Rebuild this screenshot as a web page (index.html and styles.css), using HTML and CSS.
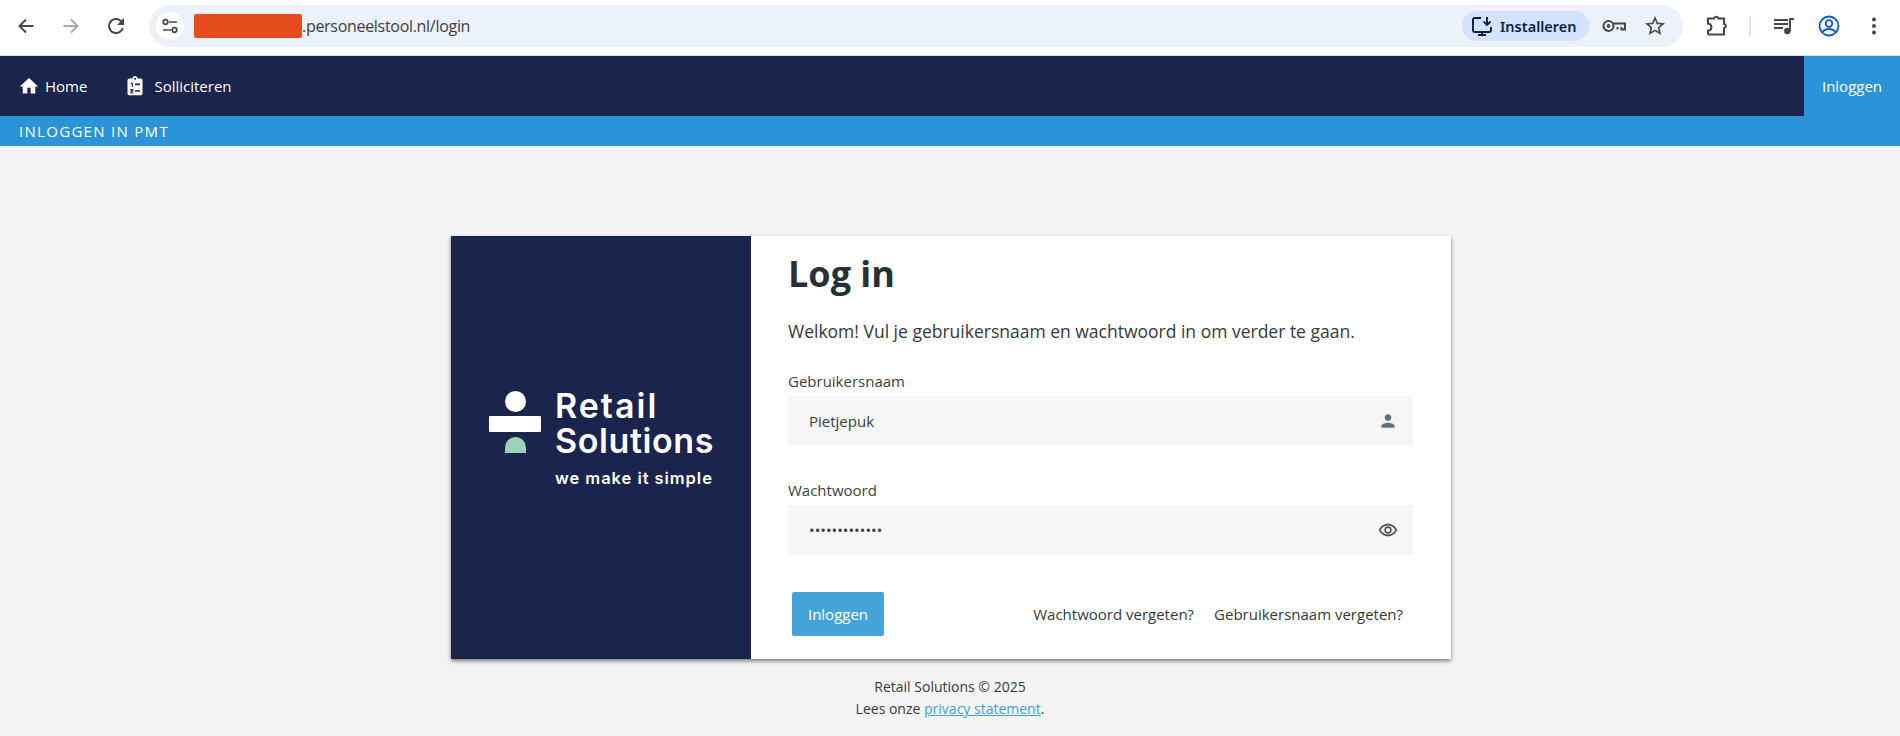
FILE: index.html
```html
<!DOCTYPE html>
<html lang="nl">
<head>
<meta charset="utf-8">
<title>Inloggen in PMT</title>
<link rel="stylesheet" href="styles.css">
</head>
<body>
<header class="browser">
  <svg class="bi" viewBox="0 0 24 24"><path class="ln dark" d="M19.5 12H5.5M12 5.500 5.500 12l6.500 6.500"/></svg>
  <svg class="bi" viewBox="0 0 24 24"><path class="ln faint" d="M4.500 12h14M12 5.500l6.500 6.500-6.500 6.500"/></svg>
  <svg class="bi" viewBox="0 0 24 24"><path class="fill-dark" d="M17.650 6.350A7.960 7.960 0 0 0 12 4a8 8 0 1 0 7.730 10h-2.080A6 6 0 1 1 12 6c1.660 0 3.140.69 4.220 1.780L13 11h7V4l-2.350 2.350z"/></svg>
  <div class="omnibox">
    <span class="chip">
      <svg class="bi" viewBox="0 0 24 24"><path class="ln dark thin" d="M11 8h8M5 16h8"/><circle class="ln dark thin" cx="7.500" cy="8" r="2.300"/><circle class="ln dark thin" cx="16.500" cy="16" r="2.300"/></svg>
    </span>
    <div class="url"><span class="redact"></span><span>.personeelstool.nl/login</span></div>
    <span class="install">
      <svg class="bi" viewBox="0 0 24 24"><path class="ln navy" d="M11 4H4.500A1.500 1.500 0 0 0 3 5.500v11A1.500 1.500 0 0 0 4.500 18h15a1.500 1.500 0 0 0 1.500-1.500V13M8 21h8M12 18v3M17 3v7.500M13.500 7.500l3.500 3.500 3.500-3.500"/></svg>
      Installeren
    </span>
    <svg class="bi key" viewBox="0 0 24 24"><circle class="ln heavy" cx="6.500" cy="12" r="5"/><circle class="fill-dark" cx="6.500" cy="12" r="1.900"/><path class="ln heavy" d="M11.500 9.500H23V15.500H19.500V13M15.500 15.500V13"/></svg>
    <svg class="bi star" viewBox="0 0 24 24"><path class="fill-dark" d="M22 9.240l-7.190-.62L12 2 9.190 8.630 2 9.240l5.460 4.730L5.820 21 12 17.270 18.180 21l-1.630-7.030L22 9.240zM12 15.400l-3.760 2.270 1-4.280-3.320-2.880 4.380-.38L12 6.100l1.710 4.040 4.380.38-3.320 2.880 1 4.280L12 15.400z"/></svg>
  </div>
  <div class="tools">
    <svg class="bi" viewBox="0 0 24 24"><path class="ln heavy" d="M4 4.500h6a2.300 2.300 0 0 1 4.500 0H20v5.300a2.300 2.300 0 0 1 0 4.500v6.200H5l-1-.8v-3c2-.2 3.400-1.600 3.400-3.500S6 9.700 4 9.500z"/></svg>
    <span class="divider"></span>
    <svg class="bi" viewBox="0 0 24 24"><path class="ln dark" d="M2 6h14M2 10h14M2 14h9"/><path class="ln dark" d="M18 17V5h4"/><circle class="fill-dark" cx="15.300" cy="17" r="3.200"/></svg>
    <svg class="bi profile" viewBox="0 0 24 24"><circle class="ln blue" cx="12" cy="12" r="9.500"/><circle class="ln blue" cx="12" cy="9.500" r="3.300"/><path class="ln blue" d="M5 18.500c2-2.700 4.500-3.500 7-3.500s5 .8 7 3.500"/></svg>
    <svg class="bi" viewBox="0 0 24 24"><circle class="fill-dark" cx="12" cy="5.500" r="2"/><circle class="fill-dark" cx="12" cy="12" r="2"/><circle class="fill-dark" cx="12" cy="18.500" r="2"/></svg>
  </div>
</header>

<nav class="nav">
  <a class="nav-item">
    <svg class="nav-icon" viewBox="0 0 24 24"><path d="M10 21v-7h4v7h5.500v-8.500H23L12 2.500 1 12.500h3.500V21z"/></svg>
    Home
  </a>
  <a class="nav-item wide">
    <svg class="nav-icon" viewBox="0 0 24 24"><path fill-rule="evenodd" d="M5 3h4a3 3 0 0 1 6 0h4a2 2 0 0 1 2 2v16a2 2 0 0 1-2 2H5a2 2 0 0 1-2-2V5a2 2 0 0 1 2-2zm7-1a1.200 1.200 0 1 0 0 2.400A1.200 1.200 0 0 0 12 2zM7 8v1.500h1V13h1.500V8zm5 1v2h6V9zm-5.500 6.500v1.200h2v.8h-2V21h3.500v-1.200H8V19h2v-3.500zM12 17v2h6v-2z"/></svg>
    Solliciteren
  </a>
  <a class="nav-login">Inloggen</a>
</nav>
<div class="subbar">INLOGGEN IN PMT</div>

<main class="page">
  <section class="card">
    <aside class="brand">
      <div class="logo">
        <div class="mark">
          <span class="mark-dot"></span>
          <span class="mark-bar"></span>
          <span class="mark-half"></span>
        </div>
        <div class="wordmark">
          <div class="word retail">Retail</div>
          <div class="word">Solutions</div>
          <div class="tagline">we make it simple</div>
        </div>
      </div>
    </aside>
    <form class="login">
      <h1 class="title">Log in</h1>
      <p class="intro">Welkom! Vul je gebruikersnaam en wachtwoord in om verder te gaan.</p>
      <label class="label" for="user">Gebruikersnaam</label>
      <div class="field">
        <input class="input" id="user" type="text" value="Pietjepuk">
        <svg class="field-icon" viewBox="0 0 24 24"><path class="slate" d="M12 12c2.210 0 4-1.790 4-4s-1.790-4-4-4-4 1.790-4 4 1.790 4 4 4zm0 2c-2.670 0-8 1.340-8 4v2h16v-2c0-2.660-5.330-4-8-4z"/></svg>
      </div>
      <label class="label second" for="pw">Wachtwoord</label>
      <div class="field">
        <input class="input" id="pw" type="password" value="1234567890123">
        <svg class="field-icon eye" viewBox="0 0 24 24"><path class="charcoal" d="M12 6.500c3.790 0 7.170 2.130 8.820 5.500-1.650 3.370-5.020 5.500-8.820 5.500S4.830 15.370 3.180 12C4.830 8.630 8.210 6.500 12 6.500m0-2C7 4.500 2.730 7.610 1 12c1.730 4.390 6 7.500 11 7.500s9.270-3.110 11-7.500c-1.730-4.390-6-7.500-11-7.500zm0 5c1.380 0 2.500 1.120 2.500 2.500s-1.120 2.500-2.500 2.500-2.500-1.120-2.500-2.500 1.120-2.500 2.500-2.500m0-2c-2.480 0-4.500 2.020-4.500 4.500s2.020 4.500 4.500 4.500 4.500-2.020 4.500-4.500-2.020-4.500-4.500-4.500z"/></svg>
      </div>
      <div class="actions">
        <button class="submit" type="button">Inloggen</button>
        <div class="links">
          <a>Wachtwoord vergeten?</a>
          <a>Gebruikersnaam vergeten?</a>
        </div>
      </div>
    </form>
  </section>
  <footer class="foot">
    <div>Retail Solutions © 2025</div>
    <div>Lees onze <a class="privacy">privacy statement</a>.</div>
  </footer>
</main>
</body>
</html>
```

FILE: styles.css
```css
* { box-sizing: border-box; }
html, body { margin: 0; height: 736px; overflow: hidden; }
body {
  display: flex;
  flex-direction: column;
  font-family: "Open Sans", "Liberation Sans", sans-serif;
  background: #f4f4f4;
  color: #2b3135;
}

/* browser chrome */
.browser {
  height: 56px;
  flex: none;
  display: flex;
  align-items: center;
  gap: 21px;
  padding: 0 14px 4px 14px;
  background: #fff;
  border-bottom: 1px solid #dcdcdc;
}
.bi { width: 24px; height: 24px; flex: none; display: block; }
.ln { fill: none; stroke-width: 1.900; stroke: #474747; }
.heavy { stroke-width: 2.100; }
.thin { stroke-width: 1.700; }
.dark { stroke: #474747; }
.faint { stroke: #a9a9a9; }
.navy { stroke: #0a1f44; }
.blue { stroke: #0b57d0; stroke-width: 1.800; }
.fill-dark { fill: #474747; }
.omnibox {
  flex: 1;
  height: 42px;
  display: flex;
  align-items: center;
  padding: 0 16px 0 7px;
  background: #ecf1fa;
  border-radius: 21px;
}
.chip {
  width: 28px;
  height: 28px;
  border-radius: 50%;
  background: #fff;
  display: flex;
  align-items: center;
  justify-content: center;
  flex: none;
}
.url {
  flex: 1;
  margin-left: 10px;
  display: flex;
  align-items: center;
  font: 16px "Open Sans", sans-serif;
  letter-spacing: -0.3px;
  color: #3c4043;
}
.redact {
  width: 108px;
  height: 24px;
  background: #e64d1c;
  border-radius: 2px;
}
.install {
  width: 127px;
  height: 30px;
  flex: none;
  display: flex;
  align-items: center;
  gap: 6px;
  padding-left: 8px;
  background: #d3e3fd;
  border-radius: 15px;
  font: 600 14.500px "Noto Sans", sans-serif;
  color: #0a1f44;
}
.key { margin-left: 13px; }
.star { margin-left: 17px; }
.tools {
  display: flex;
  align-items: center;
  gap: 21px;
  flex: none;
}
.divider { width: 2px; height: 20px; background: #d3e3fd; }

/* site nav */
.nav {
  height: 60px;
  flex: none;
  display: flex;
  align-items: center;
  padding-left: 19px;
  background: #1a244c;
  color: #fff;
  font-size: 15px;
}
.nav-item {
  display: flex;
  align-items: center;
  gap: 6px;
  margin-right: 38px;
}
.wide { gap: 9px; }
.nav-icon { width: 20px; height: 20px; fill: #fff; display: block; }
.nav-login {
  margin-left: auto;
  align-self: stretch;
  width: 96px;
  display: flex;
  align-items: center;
  justify-content: center;
  background: #2b93d8;
}
.subbar {
  height: 30px;
  flex: none;
  display: flex;
  align-items: center;
  padding-left: 19px;
  background: #2b93d8;
  color: #fff;
  font-size: 15px;
  font-weight: 500;
  letter-spacing: 1.300px;
}

/* page */
.page {
  flex: 1;
  display: flex;
  flex-direction: column;
  align-items: center;
  padding-top: 90px;
}
.card {
  width: 1000px;
  height: 423px;
  margin-left: 2px;
  display: flex;
  background: #fff;
  box-shadow: 0 2px 4px rgba(0, 0, 0, .5);
}
.brand {
  width: 300px;
  flex: none;
  display: flex;
  align-items: center;
  background: #1a244c;
  padding: 0 0 20px 38px;
}
.logo { display: flex; gap: 14px; }
.mark {
  width: 52px;
  display: flex;
  flex-direction: column;
  align-items: center;
  padding-top: 3px;
}
.mark-dot { width: 21px; height: 21px; border-radius: 50%; background: #fff; }
.mark-bar { width: 52px; height: 16px; margin-top: 4px; background: #fff; border-radius: 1px; }
.mark-half { width: 21px; height: 16px; margin-top: 5px; background: #9ad3b8; border-radius: 11px 11px 0 0; }
.wordmark { color: #fff; font-family: Inter, sans-serif; }
.word { font-size: 34px; line-height: 35px; font-weight: 600; letter-spacing: .6px; }
.retail { letter-spacing: 2px; }
.tagline { font-size: 16.500px; line-height: 20px; margin-top: 10px; font-weight: 600; letter-spacing: .95px; }

.login { flex: 1; padding: 8px 38px 0 37px; }
.title {
  margin: 0;
  font-size: 36px;
  line-height: 60px;
  font-weight: 700;
  color: #263035;
}
.intro {
  margin: 13px 0 0;
  font-size: 17.500px;
  line-height: 28px;
  color: #33393d;
}
.label {
  display: block;
  margin-top: 26px;
  font-size: 15px;
  line-height: 20px;
  color: #3a3f42;
}
.second { margin-top: 34px; }
.field {
  height: 50px;
  margin-top: 5px;
  display: flex;
  align-items: center;
  padding: 0 15px 0 21px;
  background: #f6f6f6;
  border-radius: 2px;
}
.input {
  flex: 1;
  min-width: 0;
  border: 0;
  outline: 0;
  padding: 0;
  background: transparent;
  font: 15px "Open Sans", sans-serif;
  color: #3a3f42;
}
.field-icon { width: 20px; height: 20px; flex: none; display: block; }
.slate { fill: #5e7382; }
.charcoal { fill: #4a5055; }
.actions {
  display: flex;
  align-items: center;
  justify-content: space-between;
  margin-top: 37px;
  padding: 0 10px 0 4px;
}
.submit {
  width: 92px;
  height: 44px;
  border: 0;
  border-radius: 2px;
  background: #45a5d9;
  color: #fff;
  font: 15px "Open Sans", sans-serif;
}
.links {
  display: flex;
  gap: 20px;
  font-size: 15px;
  color: #33393d;
}

.foot {
  margin-top: 17px;
  text-align: center;
  font-size: 14px;
  line-height: 22px;
  color: #33393d;
}
.privacy { color: #3d9fd8; text-decoration: underline; }
```
